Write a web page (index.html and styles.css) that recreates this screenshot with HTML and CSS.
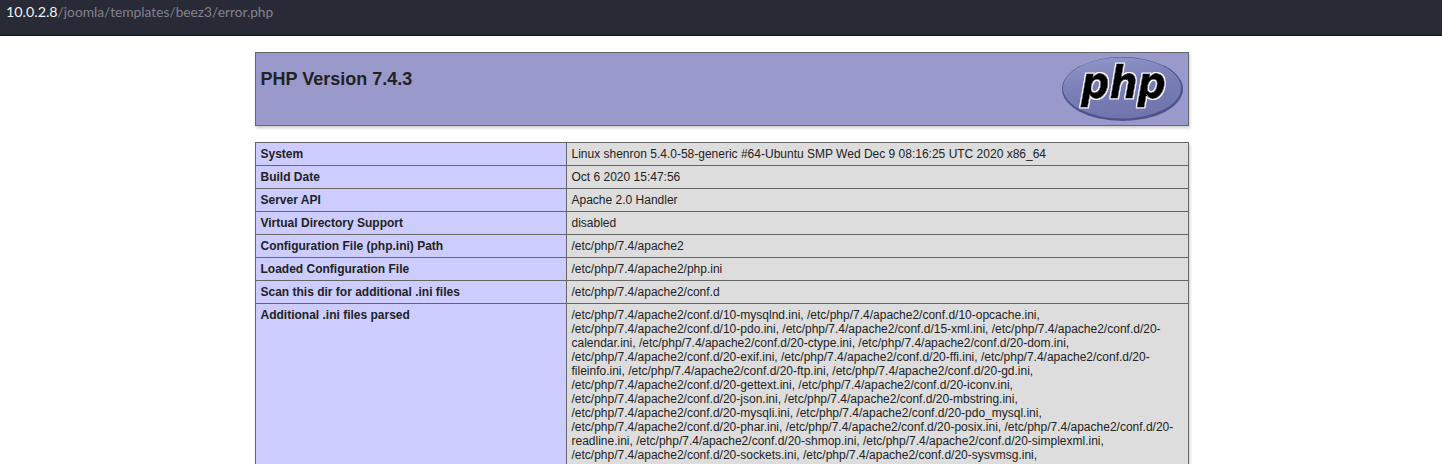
FILE: index.html
```html
<!DOCTYPE html>
<html lang="en">
<head>
<meta charset="utf-8">
<title>PHP 7.4.3 - phpinfo()</title>
<link rel="stylesheet" href="styles.css">
</head>
<body>
<header class="addressbar"><span class="host">10.0.2.8</span><span class="path">/joomla/templates/beez3/error.php</span></header>
<main class="center">
<table class="info">
<tr class="h"><td class="headcell">
<a class="logo" href="#" aria-label="PHP logo"><svg width="122" height="64" viewBox="0 0 122 64" aria-hidden="true">
<defs>
<linearGradient id="orb" x1="0.3" y1="0" x2="0.6" y2="1"><stop offset="0" stop-color="#8f94c8"/><stop offset="0.45" stop-color="#7b7fb8"/><stop offset="1" stop-color="#7074ac"/></linearGradient>
<filter id="halo" x="-10%" y="-10%" width="120%" height="120%">
<feMorphology in="SourceAlpha" operator="dilate" radius="1.1" result="grown"/>
<feFlood flood-color="#fff"/>
<feComposite in2="grown" operator="in" result="outline"/>
<feMerge><feMergeNode in="outline"/><feMergeNode in="SourceGraphic"/></feMerge>
</filter>
</defs>
<ellipse cx="61.5" cy="32" rx="60.5" ry="32" fill="#50538a"/>
<ellipse cx="61" cy="31" rx="59" ry="30.5" fill="url(#orb)"/>
<text class="logotext" x="20" y="41" textLength="85" lengthAdjust="spacingAndGlyphs" filter="url(#halo)">php</text>
</svg></a>
<h1 class="title">PHP Version 7.4.3</h1>
</td></tr>
</table>
<table class="info">
<tr><td class="e">System</td><td class="v">Linux shenron 5.4.0-58-generic #64-Ubuntu SMP Wed Dec 9 08:16:25 UTC 2020 x86_64</td></tr>
<tr><td class="e">Build Date</td><td class="v">Oct 6 2020 15:47:56</td></tr>
<tr><td class="e">Server API</td><td class="v">Apache 2.0 Handler</td></tr>
<tr><td class="e">Virtual Directory Support</td><td class="v">disabled</td></tr>
<tr><td class="e">Configuration File (php.ini) Path</td><td class="v">/etc/php/7.4/apache2</td></tr>
<tr><td class="e">Loaded Configuration File</td><td class="v">/etc/php/7.4/apache2/php.ini</td></tr>
<tr><td class="e">Scan this dir for additional .ini files</td><td class="v">/etc/php/7.4/apache2/conf.d</td></tr>
<tr><td class="e">Additional .ini files parsed</td><td class="v">/etc/php/7.4/apache2/conf.d/10-mysqlnd.ini, /etc/php/7.4/apache2/conf.d/10-opcache.ini, /etc/php/7.4/apache2/conf.d/10-pdo.ini, /etc/php/7.4/apache2/conf.d/15-xml.ini, /etc/php/7.4/apache2/conf.d/20-calendar.ini, /etc/php/7.4/apache2/conf.d/20-ctype.ini, /etc/php/7.4/apache2/conf.d/20-dom.ini, /etc/php/7.4/apache2/conf.d/20-exif.ini, /etc/php/7.4/apache2/conf.d/20-ffi.ini, /etc/php/7.4/apache2/conf.d/20-fileinfo.ini, /etc/php/7.4/apache2/conf.d/20-ftp.ini, /etc/php/7.4/apache2/conf.d/20-gd.ini, /etc/php/7.4/apache2/conf.d/20-gettext.ini, /etc/php/7.4/apache2/conf.d/20-iconv.ini, /etc/php/7.4/apache2/conf.d/20-json.ini, /etc/php/7.4/apache2/conf.d/20-mbstring.ini, /etc/php/7.4/apache2/conf.d/20-mysqli.ini, /etc/php/7.4/apache2/conf.d/20-pdo_mysql.ini, /etc/php/7.4/apache2/conf.d/20-phar.ini, /etc/php/7.4/apache2/conf.d/20-posix.ini, /etc/php/7.4/apache2/conf.d/20-readline.ini, /etc/php/7.4/apache2/conf.d/20-shmop.ini, /etc/php/7.4/apache2/conf.d/20-simplexml.ini, /etc/php/7.4/apache2/conf.d/20-sockets.ini, /etc/php/7.4/apache2/conf.d/20-sysvmsg.ini,</td></tr>
</table>
</main>
</body>
</html>
```
FILE: styles.css
```css
html, body {
  margin: 0;
  padding: 0;
  height: 464px;
  overflow: hidden;
  background: #fff;
}
body {
  font-family: "Liberation Sans", Arial, sans-serif;
  color: #222;
}
.addressbar {
  box-sizing: border-box;
  height: 36px;
  padding: 3px 0 0 6px;
  background: #282a36;
  border-bottom: 1px solid #14151b;
  font-family: Lato, sans-serif;
  font-size: 14.3px;
  line-height: 17px;
}
.host { color: #f0f0f0; }
.path { color: #80838f; font-size: 13.75px; }
.center {
  display: flex;
  flex-direction: column;
  align-items: center;
  gap: 16px;
  padding: 16px 0 0 1px;
}
.info {
  border-collapse: collapse;
  width: 934px;
  box-shadow: 1px 2px 3px #ccc;
  table-layout: fixed;
}
.info td {
  border: 1px solid #666;
  font-size: 12px;
  vertical-align: baseline;
  padding: 4px 5px;
}
.info .headcell {
  background: #99c;
  height: 64px;
  box-sizing: content-box;
}
.title {
  margin: 0;
  padding-top: 12px;
  font-size: 18px;
  font-weight: bold;
}
.logo {
  float: right;
  display: block;
  height: 64px;
}
.logo svg { display: block; }
.logotext {
  font-family: "DejaVu Sans", sans-serif;
  font-size: 45px;
  font-weight: bold;
  font-style: italic;
  fill: #000;
  stroke: #000;
  stroke-width: 0.8px;
}
.e {
  width: 300px;
  background: #ccf;
  font-weight: bold;
}
.v {
  background: #ddd;
}
```
